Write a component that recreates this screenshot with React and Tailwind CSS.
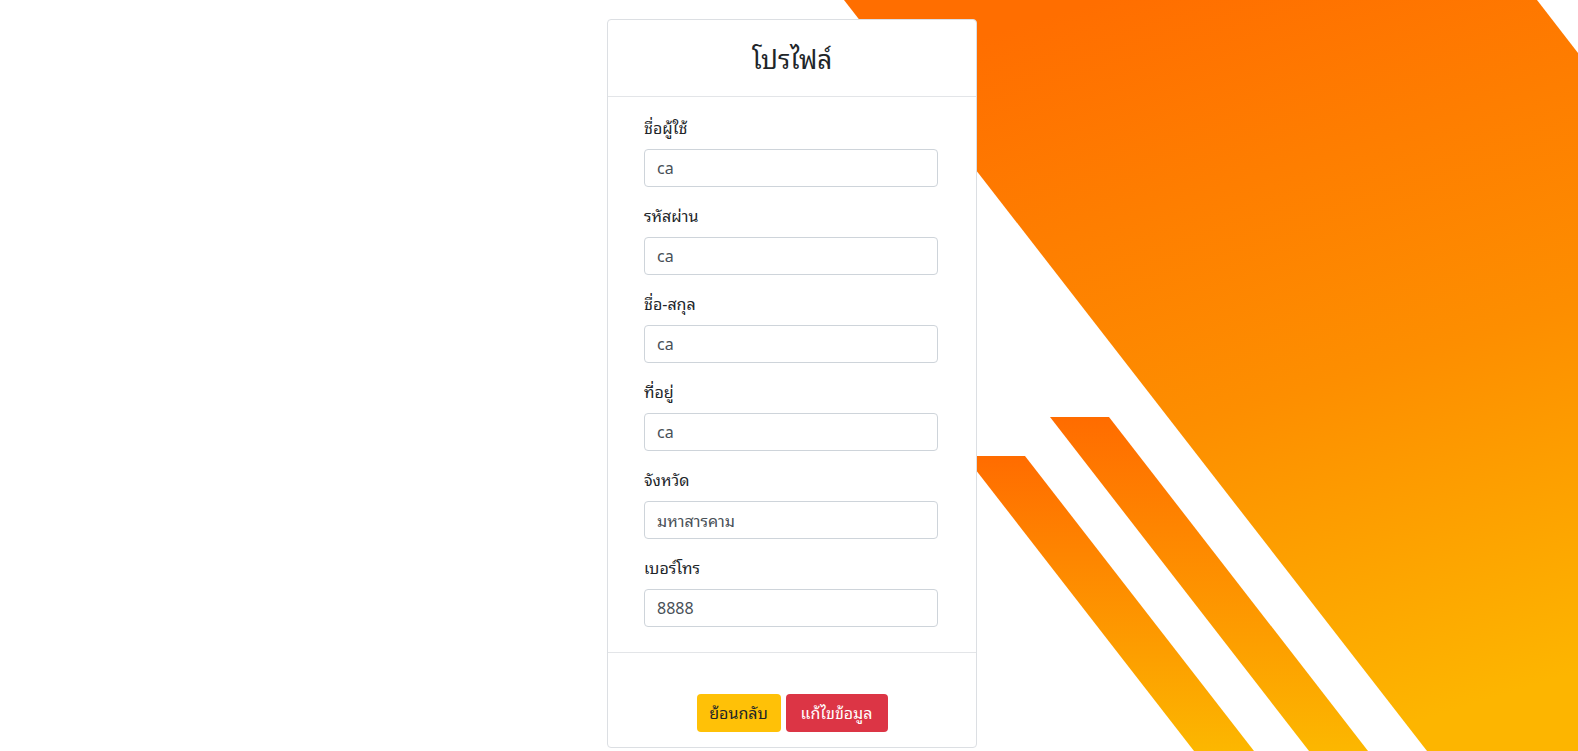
const fields = [
  { label: 'ชื่อผู้ใช้', value: 'ca' },
  { label: 'รหัสผ่าน', value: 'ca' },
  { label: 'ชื่อ-สกุล', value: 'ca' },
  { label: 'ที่อยู่', value: 'ca' },
  { label: 'จังหวัด', value: 'มหาสารคาม' },
  { label: 'เบอร์โทร', value: '8888' },
]

// Orange diagonal shapes behind the card
function Backdrop() {
  return (
    <svg
      className="absolute top-0 left-0"
      width="1578"
      height="751"
      viewBox="0 0 1578 751"
      preserveAspectRatio="none"
    >
      <defs>
        <linearGradient id="big" x1="0.35" y1="0" x2="0.65" y2="1">
          <stop offset="0" stopColor="#ff6e00" />
          <stop offset="0.55" stopColor="#fd8e00" />
          <stop offset="1" stopColor="#fdb500" />
        </linearGradient>
        <linearGradient id="stripe" x1="0" y1="0" x2="0" y2="1">
          <stop offset="0" stopColor="#ff6c00" />
          <stop offset="1" stopColor="#fcb700" />
        </linearGradient>
      </defs>
      <polygon points="844,0 1537,0 1578,53 1578,751 1427,751" fill="url(#big)" />
      <polygon points="965,456 1025,456 1254,751 1194,751" fill="url(#stripe)" />
      <polygon points="1050,417 1109,417 1368,751 1309,751" fill="url(#stripe)" />
    </svg>
  )
}

export default function App() {
  return (
    <div
      className="relative w-full min-h-[751px] overflow-hidden bg-white text-[#212529]"
      style={{ fontFamily: '"Noto Sans", "Noto Sans Thai Looped", Loma, Garuda, "Noto Sans Thai", sans-serif' }}
    >
      <Backdrop />
      <div className="relative flex justify-center pt-[19px]">
        <div className="ml-[6px] w-[370px] h-[729px] bg-white border border-[#dcdfe3] rounded flex flex-col">
          {/* Header */}
          <div className="h-[77px] flex items-center justify-center border-b border-[#e3e5e8]">
            <h3 className="text-[26px] font-normal leading-none pt-[2px]">โปรไฟล์</h3>
          </div>

          {/* Body */}
          <div className="pl-[36px] pt-[18px] pb-[9px] border-b border-[#e3e5e8]">
            {fields.map((f) => (
              <div key={f.label} className="mb-4">
                <label className="block h-[26px] mb-2 text-[16px] leading-[26px]">{f.label}</label>
                <input
                  readOnly
                  value={f.value}
                  className="block w-[294px] h-[38px] px-3 text-[16px] text-[#495057] bg-white border border-[#ced4da] rounded outline-none"
                />
              </div>
            ))}
          </div>

          {/* Footer */}
          <div className="flex-1 flex items-start justify-center gap-[5px] pt-[41px]">
            <button className="w-[84px] h-[38px] rounded bg-[#ffc107] text-[#212529] text-[16px]">ย้อนกลับ</button>
            <button className="w-[102px] h-[38px] rounded bg-[#dc3545] text-white text-[16px]">แก้ไขข้อมูล</button>
          </div>
        </div>
      </div>
    </div>
  )
}
